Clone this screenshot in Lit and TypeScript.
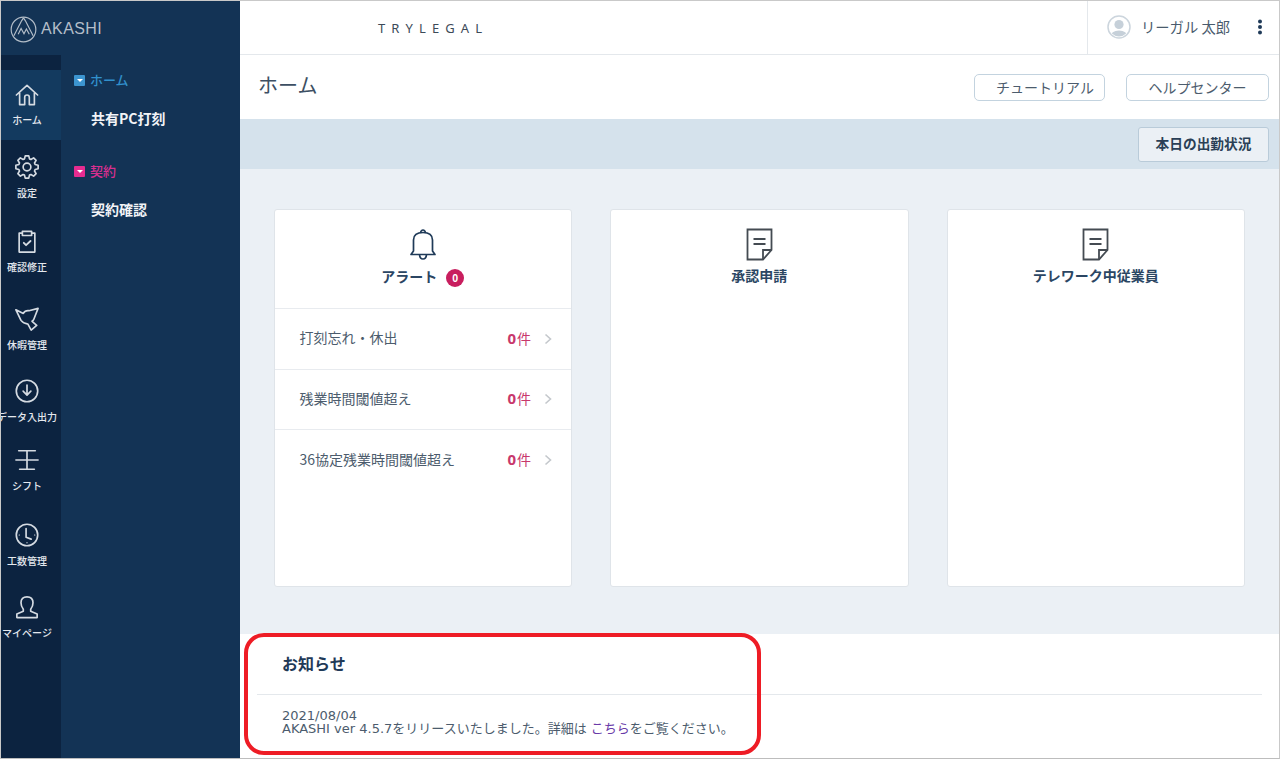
import { LitElement, html, css, svg } from "lit";
import { customElement } from "lit/decorators.js";

const icon = (body: any, size = 24) => html`<svg class="ic" width=${size} height=${size} viewBox="0 0 26 26" fill="none" stroke="currentColor" stroke-width="1.8" stroke-linecap="round" stroke-linejoin="round">${body}</svg>`;

const gearPath = (() => {
  const pts: string[] = [];
  const n = 8;
  for (let i = 0; i < n; i++) {
    const a = (i / n) * Math.PI * 2 - Math.PI / 2;
    const step = (Math.PI * 2) / n;
    const p = (r: number, t: number) => `${(13 + r * Math.cos(t)).toFixed(2)} ${(13 + r * Math.sin(t)).toFixed(2)}`;
    pts.push(p(9.2, a - step * 0.38), p(12.2, a - step * 0.2), p(12.2, a + step * 0.2), p(9.2, a + step * 0.38));
  }
  return "M" + pts.join("L") + "Z";
})();

const railIcons: Record<string, any> = {
  home: svg`<path d="M1.500 13 13 2.500 24.500 13M5 10.500V23.500H10.500V15.500Q10.500 13 13 13T15.500 15.500V23.500H21V10.500"/>`,
  gear: svg`<path d=${gearPath}/><circle cx="13" cy="13" r="4.200"/>`,
  check: svg`<path d="M8 4.500H4.500V25H21.500V4.500H18M8 2.500H18V7H8Z"/><path d="M9.500 15 12 17.500 16.800 13" stroke-width="2"/>`,
  bird: svg`<path d="M1 3 9 7Q11 3.500 15 4L25 1.500 20.500 13Q20 14.500 18.500 15.500L23.500 20 17.500 25 14 18.500Q9 18 6.500 14.500Z"/>`,
  down: svg`<circle cx="13" cy="13" r="11.600"/><path d="M13 6.500V17M8.800 13.200 13 17.400 17.200 13.200"/>`,
  shift: svg`<path d="M4 3H22M1 13H25M5 23H21M13 3V23"/>`,
  clock: svg`<circle cx="13" cy="13" r="11.600"/><path d="M12 6V15.500L17.500 17.500"/><path d="M4.500 13h.3M21.200 13h.3M13 21.200v.3" stroke-width="1.300"/>`,
  user: svg`<path d="M9 15.500Q6.500 12.500 6.500 8.500 6.500 2 13 2T19.500 8.500Q19.500 12.500 17 15.500V17.500L24 20.500V24.500H2V20.500L9 17.500Z"/>`,
};

const rail = [
  { i: "home", l: "ホーム", h: 70, top: 13, active: true },
  { i: "gear", l: "設定", h: 74, top: 15 },
  { i: "check", l: "確認修正", h: 76, top: 15 },
  { i: "bird", l: "休暇管理", h: 74, top: 17 },
  { i: "down", l: "データ入出力", h: 71, top: 15 },
  { i: "shift", l: "シフト", h: 73, top: 13 },
  { i: "clock", l: "工数管理", h: 73, top: 15 },
  { i: "user", l: "マイページ", h: 70, top: 14 },
];

const rows = ["打刻忘れ・休出", "残業時間閾値超え", "36協定残業時間閾値超え"];

const docIcon = html`<svg class="doc" width="27" height="33" viewBox="0 0 27 33" fill="none" stroke="#444b52" stroke-width="1.800"><path d="M1.500 1.500H25.500V22L17 31.500H1.500Z"/><path d="M17 31.500V22H25.500" /><path d="M7.500 11H19.500M7.500 16H19.500"/></svg>`;

@customElement("app-root")
export class AppRoot extends LitElement {
  static styles = css`
    :host { display: block; width: 1280px; height: 759px; overflow: hidden; font-family: "Noto Sans CJK JP", "Noto Sans", sans-serif; color: #133355; }
    .app { position: relative; box-sizing: border-box; width: 1280px; height: 759px; border: 1px solid #c9c9c9; border-bottom-color: #bdbdbd; display: flex; background: #fff; }
    .side { width: 239px; flex: none; background: #133355; display: flex; flex-direction: column; }
    .logo { height: 54px; flex: none; display: flex; align-items: center; padding-left: 9px; gap: 4px; color: #b4bec9; font: 16px "Liberation Sans", sans-serif; letter-spacing: 0.4px; }
    .logo svg { margin-top: 2px; }
    .logo span { margin-top: 2px; }
    .nav { flex: 1; display: flex; }
    .rail { width: 60px; flex: none; background: #0c2340; padding-top: 15px; overflow: hidden; }
    .item { box-sizing: border-box; display: flex; flex-direction: column; align-items: center; padding-right: 8px; color: #d5dbe2; white-space: nowrap; }
    .item.active { background: #133a5f; }
    .item .ic { flex: none; }
    .item span { font-size: 10px; line-height: 14px; margin-top: 7px; font-weight: 500; color: #e4e8ee; }
    .item.active span { margin-top: 6px; }
    .panel { flex: 1; padding: 16px 0 0 13px; }
    .group { display: flex; align-items: center; gap: 5px; font-size: 13px; font-weight: 500; line-height: 18px; }
    .group i { width: 11px; height: 11px; border-radius: 1px; display: flex; align-items: center; justify-content: center; }
    .group i::after { content: ""; border: 3px solid transparent; border-top: 3px solid #fff; border-bottom: 0; }
    .blue { color: #3190cc; }
    .blue i { background: #3c95d0; }
    .pink { color: #d92f8f; }
    .pink i { background: #e62c90; }
    .sub { font-size: 14px; font-weight: 700; color: #f2f4f7; padding-left: 17px; line-height: 20px; margin: 19px 0 34px; }
    .main { flex: 1; min-width: 0; display: flex; flex-direction: column; }
    .top { height: 54px; flex: none; box-sizing: border-box; border-bottom: 1px solid #e4e8ec; display: flex; align-items: center; }
    .brand { margin-left: 138px; font-size: 13px; letter-spacing: 6.100px; color: #3d4a58; font-family: "Noto Sans", sans-serif; flex: 1; }
    .user { width: 192px; height: 100%; box-sizing: border-box; border-left: 1px solid #e4e8ec; display: flex; align-items: center; padding: 0 0 2px 19px; font-size: 14.300px; color: #4a5b6d; gap: 10px; }
    .user svg.dots { margin-left: 17px; }
    .title { height: 64px; flex: none; display: flex; align-items: flex-start; padding: 19px 10px 0 18px; gap: 21px; box-sizing: border-box; }
    .title h1 { margin: 1px auto 0 0; font-size: 20px; line-height: 20px; font-weight: 400; color: #3d4f63; }
    .btn { box-sizing: border-box; height: 27px; padding-bottom: 2px; border: 1.500px solid #c3d3df; border-radius: 5px; background: #fff; color: #4c5c6d; font-size: 14px; display: flex; align-items: center; justify-content: center; }
    .b1 { width: 131px; padding-left: 11px; }
    .b2 { width: 143px; }
    .band { height: 50px; flex: none; background: #d5e2ec; display: flex; align-items: center; justify-content: flex-end; padding-right: 10px; }
    .b3 { width: 131px; height: 35px; padding-bottom: 3px; background: #ebf0f5; border-color: #b9cbd9; border-radius: 3px; font-weight: 700; font-size: 13.700px; color: #2a3f56; }
    .content { height: 465px; flex: none; box-sizing: border-box; background: #ebf0f5; padding: 40px 0 0 33.500px; display: flex; gap: 38px; }
    .card { box-sizing: border-box; width: 298.500px; height: 378px; background: #fff; border: 1px solid #dfe4e9; border-radius: 3px; display: flex; flex-direction: column; }
    .head { height: 99px; flex: none; box-sizing: border-box; padding-top: 18px; display: flex; flex-direction: column; align-items: center; }
    .head.b { border-bottom: 1px solid #e8ebef; }
    .ct { font-size: 14px; font-weight: 700; line-height: 20px; margin-top: 4px; color: #2b4663; display: flex; align-items: flex-start; gap: 9px; }
    .badge { width: 18px; height: 18px; margin-top: 3px; border-radius: 50%; background: #c81e5e; color: #fff; font-size: 10px; font-weight: 700; display: flex; align-items: center; justify-content: center; }
    .row { height: 60.500px; flex: none; box-sizing: border-box; border-bottom: 1px solid #e8ebef; display: flex; align-items: center; padding: 0 19px 0 25px; font-size: 14px; color: #4c5c6d; }
    .row:last-child { border-bottom: 0; }
    .row .l { flex: 1; padding-bottom: 3px; }
    .row .n { color: #c8386c; font-size: 14px; margin-right: 13px; padding-bottom: 2px; }
    .row .n b { font-family: "Noto Sans", sans-serif; font-size: 15px; font-weight: 700; letter-spacing: 1px; }
    .note { flex: 1; padding: 0 17px; }
    .note h2 { margin: 0; padding: 18px 0 0 25px; height: 61px; box-sizing: border-box; font-size: 16px; line-height: 22px; font-weight: 700; color: #1f3a58; border-bottom: 1px solid #e4e8ec; }
    .note p { margin: 14px 0 0 25px; font-size: 13px; line-height: 13px; font-family: "DejaVu Sans", "Noto Sans CJK JP", sans-serif; color: #4c5c6d; white-space: nowrap; }
    .note a { color: #6a3aa8; }
    .mark { position: absolute; left: 243px; top: 632px; width: 517px; height: 122px; box-sizing: border-box; border: 4px solid #ee1c25; border-radius: 20px; pointer-events: none; }
  `;

  render() {
    return html`<div class="app">
      <aside class="side">
        <div class="logo">
          <svg width="27" height="27" viewBox="0 0 28 28" fill="none" stroke="currentColor" stroke-width="1.200"><circle cx="14" cy="14" r="12.800"/><path d="M4 20.500 12 5 14 2M14 2 16 5 24 20.500M8.500 19 11.500 13 14.500 18.500 17 13.500 20 19"/></svg>
          <span>AKASHI</span>
        </div>
        <div class="nav">
          <div class="rail">
            ${rail.map(r => html`<div class="item ${r.active ? "active" : ""}" style="height:${r.h}px;padding-top:${r.top}px">${icon(railIcons[r.i])}<span>${r.l}</span></div>`)}
          </div>
          <div class="panel">
            <div class="group blue"><i></i>ホーム</div>
            <div class="sub">共有PC打刻</div>
            <div class="group pink"><i></i>契約</div>
            <div class="sub">契約確認</div>
          </div>
        </div>
      </aside>
      <main class="main">
        <header class="top">
          <div class="brand">TRYLEGAL</div>
          <div class="user">
            <svg width="24" height="24" viewBox="0 0 24 24"><circle cx="12" cy="12" r="11" fill="#fff" stroke="#ccd5dd" stroke-width="1.500"/><clipPath id="c"><circle cx="12" cy="12" r="9.500"/></clipPath><g clip-path="url(#c)" fill="#c6d0d9"><circle cx="12" cy="9.500" r="4.600"/><path d="M3 24Q3 15.500 12 15.500T21 24Z"/></g></svg>
            <span>リーガル 太郎</span>
            <svg class="dots" width="6" height="16" viewBox="0 0 6 16" fill="#1f3a58"><circle cx="3" cy="2.500" r="2"/><circle cx="3" cy="8" r="2"/><circle cx="3" cy="13.500" r="2"/></svg>
          </div>
        </header>
        <div class="title">
          <h1>ホーム</h1>
          <div class="btn b1">チュートリアル</div>
          <div class="btn b2">ヘルプセンター</div>
        </div>
        <div class="band"><div class="btn b3">本日の出勤状況</div></div>
        <div class="content">
          <section class="card">
            <div class="head b">
              <svg width="28" height="34" viewBox="0 0 28 34" fill="none" stroke="#1f3a58" stroke-width="1.700" stroke-linejoin="round"><path d="M2 26.500H26L23.500 23V12Q23.500 4.500 14 4.500T4.500 12V23Z"/><path d="M11.500 4.800Q12 2 14 2T16.500 4.800M10.500 26.500Q10.800 31 14 31T17.500 26.500"/></svg>
              <div class="ct">アラート<span class="badge">0</span></div>
            </div>
            ${rows.map(r => html`<div class="row"><span class="l">${r}</span><span class="n"><b>0</b>件</span><svg width="8" height="12" viewBox="0 0 8 12" fill="none" stroke="#c4c8cc" stroke-width="1.600"><path d="M1.500 1.500 6.500 6 1.500 10.500"/></svg></div>`)}
          </section>
          <section class="card"><div class="head">${docIcon}<div class="ct">承認申請</div></div></section>
          <section class="card"><div class="head">${docIcon}<div class="ct">テレワーク中従業員</div></div></section>
        </div>
        <section class="note">
          <h2>お知らせ</h2>
          <p>2021/08/04<br />AKASHI ver 4.5.7をリリースいたしました。詳細は <a>こちら</a>をご覧ください。</p>
        </section>
      </main>
      <div class="mark"></div>
    </div>`;
  }
}
